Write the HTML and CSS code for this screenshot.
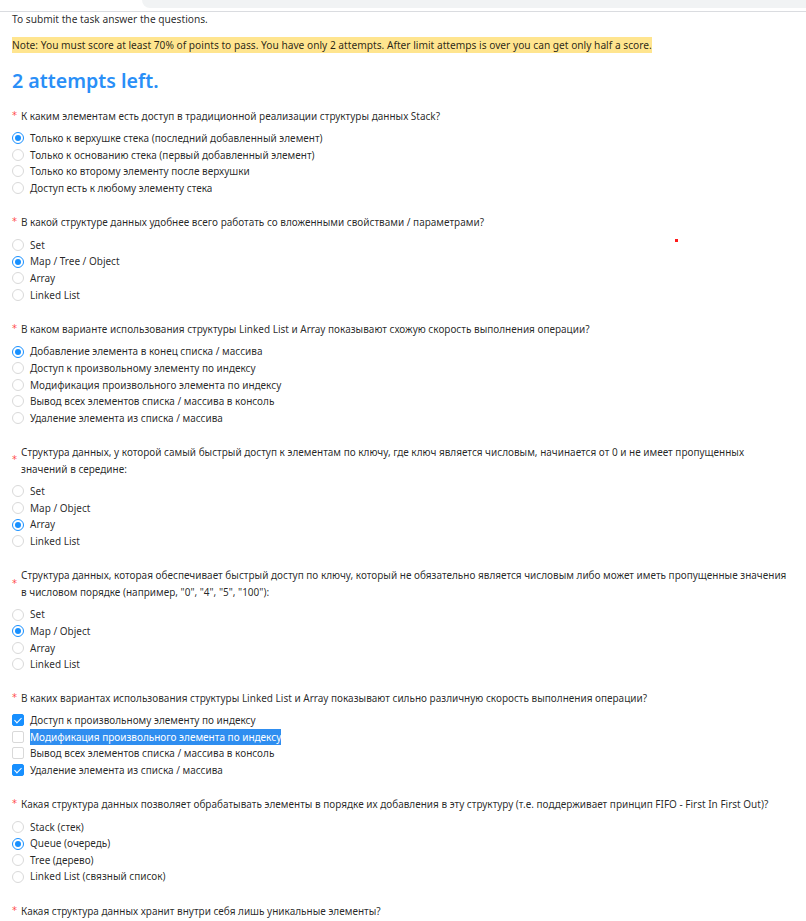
FILE: index.html
```html
<!DOCTYPE html>
<html lang="ru">
<head>
<meta charset="utf-8">
<title>Quiz</title>
<link rel="stylesheet" href="styles.css">
</head>
<body>
<div class="chrome"><div class="addr"></div></div>
<main class="page">
  <p class="intro">To submit the task answer the questions.</p>
  <p class="note"><mark>Note: You must score at least 70% of points to pass. You have only 2 attempts. After limit attemps is over you can get only half a score.</mark></p>
  <h2 class="attempts">2 attempts left.</h2>

  <form class="quiz">
    <div class="item">
      <div class="label"><span class="req">*</span><span class="qtext">К каким элементам есть доступ в традиционной реализации структуры данных Stack?</span></div>
      <div class="options">
        <label class="opt"><span class="radio on"></span>Только к верхушке стека (последний добавленный элемент)</label>
        <label class="opt"><span class="radio"></span>Только к основанию стека (первый добавленный элемент)</label>
        <label class="opt"><span class="radio"></span>Только ко второму элементу после верхушки</label>
        <label class="opt"><span class="radio"></span>Доступ есть к любому элементу стека</label>
      </div>
    </div>

    <div class="item">
      <div class="label"><span class="req">*</span><span class="qtext">В какой структуре данных удобнее всего работать со вложенными свойствами / параметрами?</span></div>
      <div class="options">
        <label class="opt"><span class="radio"></span>Set</label>
        <label class="opt"><span class="radio on"></span>Map / Tree / Object</label>
        <label class="opt"><span class="radio"></span>Array</label>
        <label class="opt"><span class="radio"></span>Linked List</label>
      </div>
    </div>

    <div class="item">
      <div class="label"><span class="req">*</span><span class="qtext">В каком варианте использования структуры Linked List и Array показывают схожую скорость выполнения операции?</span></div>
      <div class="options">
        <label class="opt"><span class="radio on"></span>Добавление элемента в конец списка / массива</label>
        <label class="opt"><span class="radio"></span>Доступ к произвольному элементу по индексу</label>
        <label class="opt"><span class="radio"></span>Модификация произвольного элемента по индексу</label>
        <label class="opt"><span class="radio"></span>Вывод всех элементов списка / массива в консоль</label>
        <label class="opt"><span class="radio"></span>Удаление элемента из списка / массива</label>
      </div>
    </div>

    <div class="item">
      <div class="label"><span class="req">*</span><span class="qtext">Структура данных, у которой самый быстрый доступ к элементам по ключу, где ключ является числовым, начинается от 0 и не имеет пропущенных<br>значений в середине:</span></div>
      <div class="options">
        <label class="opt"><span class="radio"></span>Set</label>
        <label class="opt"><span class="radio"></span>Map / Object</label>
        <label class="opt"><span class="radio on"></span>Array</label>
        <label class="opt"><span class="radio"></span>Linked List</label>
      </div>
    </div>

    <div class="item">
      <div class="label"><span class="req">*</span><span class="qtext">Структура данных, которая обеспечивает быстрый доступ по ключу, который не обязательно является числовым либо может иметь пропущенные значения<br>в числовом порядке (например, "0", "4", "5", "100"):</span></div>
      <div class="options">
        <label class="opt"><span class="radio"></span>Set</label>
        <label class="opt"><span class="radio on"></span>Map / Object</label>
        <label class="opt"><span class="radio"></span>Array</label>
        <label class="opt"><span class="radio"></span>Linked List</label>
      </div>
    </div>

    <div class="item item-check">
      <div class="label"><span class="req">*</span><span class="qtext">В каких вариантах использования структуры Linked List и Array показывают сильно различную скорость выполнения операции?</span></div>
      <div class="options">
        <label class="opt"><span class="check on"></span>Доступ к произвольному элементу по индексу</label>
        <label class="opt"><span class="check"></span><span class="sel">Модификация произвольного элемента по индексу</span></label>
        <label class="opt"><span class="check"></span>Вывод всех элементов списка / массива в консоль</label>
        <label class="opt"><span class="check on"></span>Удаление элемента из списка / массива</label>
      </div>
    </div>

    <div class="item">
      <div class="label"><span class="req">*</span><span class="qtext">Какая структура данных позволяет обрабатывать элементы в порядке их добавления в эту структуру (т.е. поддерживает принцип FIFO - First In First Out)?</span></div>
      <div class="options">
        <label class="opt"><span class="radio"></span>Stack (стек)</label>
        <label class="opt"><span class="radio on"></span>Queue (очередь)</label>
        <label class="opt"><span class="radio"></span>Tree (дерево)</label>
        <label class="opt"><span class="radio"></span>Linked List (связный список)</label>
      </div>
    </div>

    <div class="item">
      <div class="label"><span class="req">*</span><span class="qtext">Какая структура данных хранит внутри себя лишь уникальные элементы?</span></div>
    </div>
  </form>
  <span class="dot"></span>
</main>
</body>
</html>
```
FILE: styles.css
```css
html, body {
  margin: 0;
  padding: 0;
  background: #fff;
}
body {
  font-family: "Noto Sans", "Open Sans", sans-serif;
  font-size: 10px;
  line-height: 16.5px;
  color: rgba(0, 0, 0, 0.85);
  overflow: hidden;
}
.chrome {
  height: 11px;
  border-bottom: 1px solid #dadce0;
  position: relative;
}
.addr {
  margin-left: 142px;
  height: 8px;
  background: #f1f3f4;
  border-bottom-left-radius: 8px;
}
.page {
  position: relative;
  padding: 0 12px;
}
.intro {
  margin: 0;
  line-height: 15px;
  font-size: 10.2px;
}
.note {
  margin: 10px 0 0;
  font-size: 10.2px;
}
mark {
  background: #ffe58f;
  color: rgba(0, 0, 0, 0.85);
  padding: 1px 0;
}
.attempts {
  margin: 12px 0 0;
  font-size: 19.6px;
  line-height: 30px;
  font-weight: 600;
  color: #2a8ff7;
}
.quiz {
  margin-top: 12px;
}
.item {
  margin-bottom: 17.8px;
}
.label {
  display: flex;
  align-items: center;
  padding-bottom: 6px;
}
.item-check .label {
  padding-bottom: 5px;
}
.req {
  color: #ff4d4f;
  font-family: "DejaVu Sans", sans-serif;
  font-size: 10px;
  width: 9px;
  flex: none;
}
.qtext {
  flex: 1;
}
.options {
  display: flex;
  flex-direction: column;
}
.opt {
  display: flex;
  align-items: center;
  height: 16.6px;
}
.radio, .check {
  width: 12px;
  height: 12px;
  box-sizing: border-box;
  border: 1px solid #d9d9d9;
  background: #fff;
  margin-right: 6px;
  flex: none;
  position: relative;
}
.radio {
  border-radius: 50%;
}
.radio.on {
  border-color: #1890ff;
}
.radio.on::after {
  content: "";
  position: absolute;
  left: 2px;
  top: 2px;
  width: 6px;
  height: 6px;
  border-radius: 50%;
  background: #1890ff;
}
.check {
  border-radius: 2px;
}
.check.on {
  background: #1890ff;
  border-color: #1890ff;
}
.check.on::after {
  content: "";
  position: absolute;
  left: 3px;
  top: 1px;
  width: 3px;
  height: 6px;
  border: solid #fff;
  border-width: 0 1.5px 1.5px 0;
  transform: rotate(45deg);
}
.sel {
  background: #2f8ef0;
  color: #fff;
}
.dot {
  position: absolute;
  left: 675px;
  top: 227px;
  width: 3px;
  height: 3px;
  background: #ff1a1a;
}
```
